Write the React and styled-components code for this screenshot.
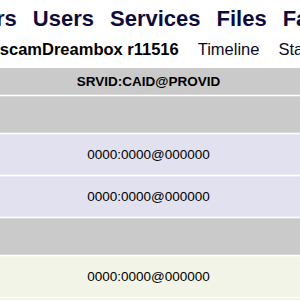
import React from 'react';
import styled, { createGlobalStyle } from 'styled-components';

const GlobalStyle = createGlobalStyle`
  html, body {
    margin: 0;
    padding: 0;
    background: #ffffff;
    overflow: hidden;
    font-family: "Liberation Sans", Arial, sans-serif;
  }
`;

const menu = ['Readers', 'Users', 'Services', 'Files', 'Failban', 'Script', 'Shutdown'];
const subMenu = ['Timeline', 'Status'];

const rows = [
  { kind: 'group', value: '' },
  { kind: 'user', value: '0000:0000@000000' },
  { kind: 'user', value: '0000:0000@000000' },
  { kind: 'group', value: '' },
  { kind: 'reader', value: '0000:0000@000000' },
  { kind: 'reader', value: '0000:0000@000000' },
];

const rowColors = {
  group: { bg: '#cacaca', edge: '#d9d9d9', height: 35 },
  user: { bg: '#e1e1ef', edge: '#eaeaf5', height: 39 },
  reader: { bg: '#f1f4e6', edge: '#f5f7ee', height: 39 },
};

function App() {
  return (
    <>
      <GlobalStyle />
      <Page>
        <Menu>
          {menu.map((item) => (
            <MenuItem key={item}>{item}</MenuItem>
          ))}
        </Menu>
        <SubBar>
          <Title>OscamDreambox r11516</Title>
          {subMenu.map((item) => (
            <SubLink key={item}>{item}</SubLink>
          ))}
        </SubBar>
        <Table>
          <thead>
            <tr>
              <HeadCell>SRVID:CAID@PROVID</HeadCell>
            </tr>
          </thead>
          <tbody>
            {rows.map((row, i) => (
              <tr key={i}>
                <Cell kind={row.kind}>{row.value}</Cell>
              </tr>
            ))}
          </tbody>
        </Table>
      </Page>
    </>
  );
}

const Page = styled.div`
  width: 300px;
  height: 300px;
  overflow: hidden;
`;

const Menu = styled.nav`
  display: flex;
  gap: 16px;
  margin-left: -70px;
  padding-top: 6px;
  white-space: nowrap;
`;

const MenuItem = styled.span`
  font-size: 22px;
  line-height: 25px;
  font-weight: bold;
  color: #0f0c3c;
`;

const SubBar = styled.div`
  display: flex;
  gap: 19px;
  margin-top: 8px;
  margin-left: -13px;
  white-space: nowrap;
`;

const Title = styled.span`
  font-size: 16.5px;
  line-height: 20px;
  font-weight: bold;
  color: #000;
`;

const SubLink = styled.span`
  font-size: 16.5px;
  line-height: 20px;
  color: #0a0a1e;
`;

const Table = styled.table`
  margin-top: 8px;
  margin-left: -20px;
  width: 337px;
  border-collapse: separate;
  border-spacing: 0 1px;
  table-layout: fixed;
`;

const HeadCell = styled.th`
  height: 26px;
  padding: 0;
  background: #cacaca;
  border-bottom: 1px solid #dadada;
  font-size: 13.5px;
  font-weight: bold;
  color: #000;
  text-align: center;
  vertical-align: middle;
`;

const Cell = styled.td`
  height: ${(p) => rowColors[p.kind].height}px;
  padding: 0;
  background: ${(p) => rowColors[p.kind].bg};
  border-top: 1px solid ${(p) => rowColors[p.kind].edge};
  border-bottom: 1px solid ${(p) => rowColors[p.kind].edge};
  font-size: 13.5px;
  color: #000;
  text-align: center;
  vertical-align: middle;
`;

export default App;
